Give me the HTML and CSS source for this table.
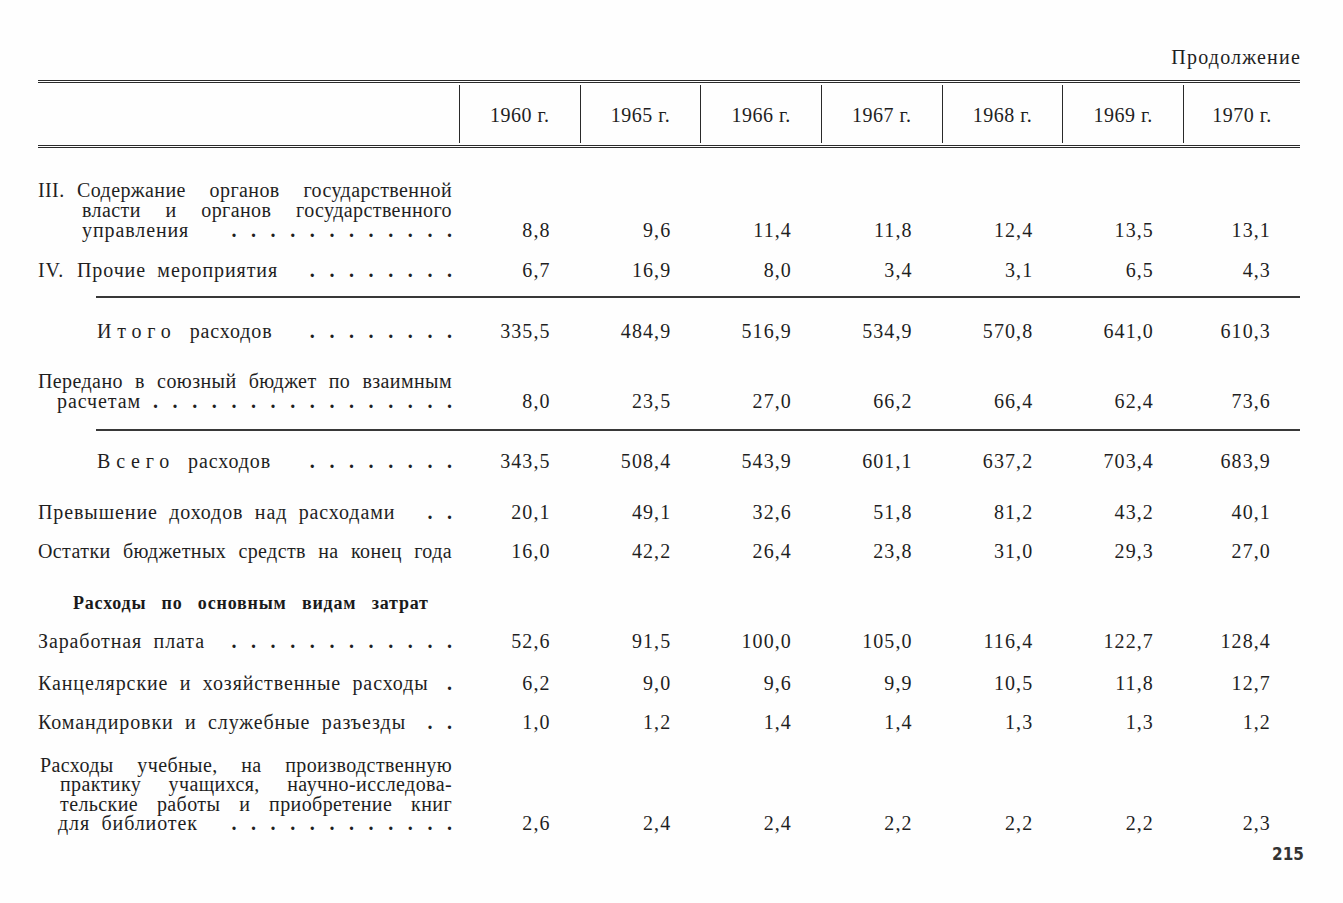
FILE: index.html
```html
<!DOCTYPE html>
<html lang="ru">
<head>
<meta charset="utf-8">
<title>Продолжение</title>
<link rel="stylesheet" href="styles.css">
</head>
<body>
<div class="page">
  <div class="cont">Продолжение</div>
  <div class="table">
    <div class="head">
      <div class="hc hfirst"></div>
      <div class="hc">1960 г.</div>
      <div class="hc">1965 г.</div>
      <div class="hc">1966 г.</div>
      <div class="hc">1967 г.</div>
      <div class="hc">1968 г.</div>
      <div class="hc">1969 г.</div>
      <div class="hc">1970 г.</div>
    </div>

    <div class="row m32">
      <div class="lbl">
        <div class="ln jl"><span class="rn">III.</span>Содержание органов государственной</div>
        <div class="ln jl in44">власти и органов государственного</div>
        <div class="ln lead in44"><span>управления</span><span class="dots">............</span></div>
      </div>
      <div class="n">8,8</div><div class="n">9,6</div><div class="n">11,4</div><div class="n">11,8</div><div class="n">12,4</div><div class="n">13,5</div><div class="n">13,1</div>
    </div>

    <div class="row m20">
      <div class="lbl">
        <div class="ln lead"><span><span class="rn">IV.</span>Прочие мероприятия</span><span class="dots">........</span></div>
      </div>
      <div class="n">6,7</div><div class="n">16,9</div><div class="n">8,0</div><div class="n">3,4</div><div class="n">3,1</div><div class="n">6,5</div><div class="n">4,3</div>
    </div>

    <div class="rule r1"></div>

    <div class="row m23">
      <div class="lbl">
        <div class="ln lead in59"><span><span class="sp">Итого</span>расходов</span><span class="dots">........</span></div>
      </div>
      <div class="n">335,5</div><div class="n">484,9</div><div class="n">516,9</div><div class="n">534,9</div><div class="n">570,8</div><div class="n">641,0</div><div class="n">610,3</div>
    </div>

    <div class="row m30">
      <div class="lbl">
        <div class="ln jl">Передано в союзный бюджет по взаимным</div>
        <div class="ln lead in19"><span>расчетам</span><span class="dots">................</span></div>
      </div>
      <div class="n">8,0</div><div class="n">23,5</div><div class="n">27,0</div><div class="n">66,2</div><div class="n">66,4</div><div class="n">62,4</div><div class="n">73,6</div>
    </div>

    <div class="rule r2"></div>

    <div class="row m20">
      <div class="lbl">
        <div class="ln lead in59"><span><span class="sp">Всего</span>расходов</span><span class="dots">........</span></div>
      </div>
      <div class="n">343,5</div><div class="n">508,4</div><div class="n">543,9</div><div class="n">601,1</div><div class="n">637,2</div><div class="n">703,4</div><div class="n">683,9</div>
    </div>

    <div class="row m31">
      <div class="lbl">
        <div class="ln lead"><span>Превышение доходов над расходами</span><span class="dots">..</span></div>
      </div>
      <div class="n">20,1</div><div class="n">49,1</div><div class="n">32,6</div><div class="n">51,8</div><div class="n">81,2</div><div class="n">43,2</div><div class="n">40,1</div>
    </div>

    <div class="row m19">
      <div class="lbl">
        <div class="ln jl">Остатки бюджетных средств на конец года</div>
      </div>
      <div class="n">16,0</div><div class="n">42,2</div><div class="n">26,4</div><div class="n">23,8</div><div class="n">31,0</div><div class="n">29,3</div><div class="n">27,0</div>
    </div>

    <div class="sub">Расходы по основным видам затрат</div>

    <div class="row m18">
      <div class="lbl">
        <div class="ln lead"><span>Заработная плата</span><span class="dots">............</span></div>
      </div>
      <div class="n">52,6</div><div class="n">91,5</div><div class="n">100,0</div><div class="n">105,0</div><div class="n">116,4</div><div class="n">122,7</div><div class="n">128,4</div>
    </div>

    <div class="row m22">
      <div class="lbl">
        <div class="ln lead"><span>Канцелярские и хозяйственные расходы</span><span class="dots">.</span></div>
      </div>
      <div class="n">6,2</div><div class="n">9,0</div><div class="n">9,6</div><div class="n">9,9</div><div class="n">10,5</div><div class="n">11,8</div><div class="n">12,7</div>
    </div>

    <div class="row m19">
      <div class="lbl">
        <div class="ln lead"><span>Командировки и служебные разъезды</span><span class="dots">..</span></div>
      </div>
      <div class="n">1,0</div><div class="n">1,2</div><div class="n">1,4</div><div class="n">1,4</div><div class="n">1,3</div><div class="n">1,3</div><div class="n">1,2</div>
    </div>

    <div class="row m24 tight">
      <div class="lbl">
        <div class="ln jl in2">Расходы учебные, на производственную</div>
        <div class="ln jl in22">практику учащихся, научно-исследова-</div>
        <div class="ln jl in22">тельские работы и приобретение книг</div>
        <div class="ln lead in20"><span>для библиотек</span><span class="dots">............</span></div>
      </div>
      <div class="n">2,6</div><div class="n">2,4</div><div class="n">2,4</div><div class="n">2,2</div><div class="n">2,2</div><div class="n">2,2</div><div class="n">2,3</div>
    </div>
  </div>
  <div class="folio">215</div>
</div>
</body>
</html>
```

FILE: styles.css
```css
html, body {
  margin: 0;
  padding: 0;
  background: #fefefe;
}

.page {
  width: 1262px;
  padding: 47px 0 0 38px;
  font-family: "Liberation Serif", "Times New Roman", serif;
  font-size: 20px;
  line-height: 20px;
  color: #1f1f1f;
}

.cont {
  text-align: right;
  letter-spacing: 1.2px;
  margin-right: -1px;
  height: 20px;
}

.table {
  margin-top: 13px;
  border-top: 3px double #2a2a2a;
}

.head,
.row {
  display: grid;
  grid-template-columns: 421px repeat(6, 120.67px) 117px;
}

.head {
  height: 62px;
  border-bottom: 3px double #2a2a2a;
  align-items: stretch;
}

.hc {
  margin: 2px 0;
  border-left: 1.5px solid #2a2a2a;
  display: flex;
  align-items: center;
  justify-content: center;
  letter-spacing: 0.5px;
  padding-top: 1px;
}

.hc.hfirst {
  border-left: none;
}

.row {
  align-items: end;
}

.m18 { margin-top: 18px; }
.m19 { margin-top: 19px; }
.m20 { margin-top: 20px; }
.m22 { margin-top: 22px; }
.m23 { margin-top: 23px; }
.m24 { margin-top: 24px; }
.m30 { margin-top: 30px; }
.m31 { margin-top: 31px; }
.m32 { margin-top: 32px; }

.row.tight {
  line-height: 19.4px;
}

.lbl {
  padding-right: 7px;
  letter-spacing: 0.4px;
  word-spacing: 2.5px;
}

.ln {
  white-space: nowrap;
  height: 20px;
}

.tight .ln {
  height: 19.4px;
}

.jl {
  white-space: normal;
  text-align: justify;
  text-align-last: justify;
}

.in2 { padding-left: 2px; }
.in19 { padding-left: 19px; }
.in20 { padding-left: 20px; }
.in22 { padding-left: 22px; }
.in44 { padding-left: 44px; }
.in59 { padding-left: 59px; }

.rn {
  display: inline-block;
  width: 39px;
}

.lead {
  display: flex;
  justify-content: space-between;
  align-items: baseline;
  letter-spacing: 0.9px;
  word-spacing: 5.5px;
}

.dots {
  letter-spacing: 14.6px;
  margin-right: -14.6px;
  font-weight: bold;
}

.sp {
  letter-spacing: 5.8px;
  margin-right: 13px;
}

.n {
  text-align: right;
  padding-right: 29px;
  letter-spacing: 1.1px;
}

.rule {
  margin-left: 58px;
  border-top: 2px solid #383838;
}

.r1 { margin-top: 16px; }
.r2 { margin-top: 18px; }

.sub {
  margin-top: 32px;
  padding-left: 35px;
  height: 20px;
  font-weight: bold;
  font-size: 18px;
  letter-spacing: 0.8px;
  word-spacing: 10px;
  color: #1a1a1a;
}

.folio {
  margin-top: 10px;
  text-align: right;
  margin-right: -4px;
  font-family: "DejaVu Sans Condensed", "DejaVu Sans", sans-serif;
  font-stretch: condensed;
  font-weight: bold;
  font-size: 17px;
  color: #333;
}
```
